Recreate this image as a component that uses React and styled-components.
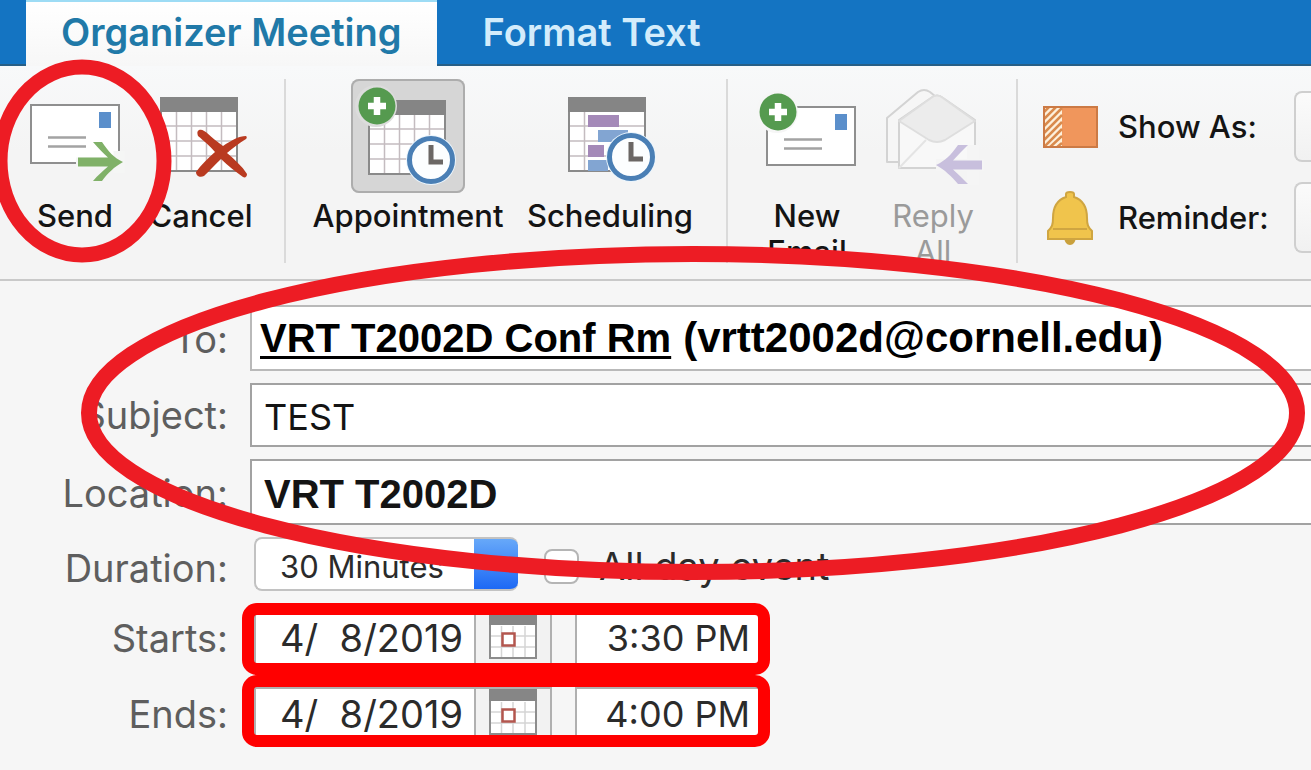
import React from "react";
import styled, { createGlobalStyle } from "styled-components";

const GlobalStyle = createGlobalStyle`
  * {
    box-sizing: border-box;
  }
  body {
    margin: 0;
    background: #f6f6f6;
    font-family: Inter, "Liberation Sans", sans-serif;
    overflow-x: hidden;
  }
  button, input, select {
    font-family: inherit;
    margin: 0;
  }
`;

function Envelope({ x, y }) {
  return (
    <g transform={`translate(${x} ${y})`}>
      <rect x="1" y="1" width="88" height="58" fill="#fff" stroke="#8f8f8f" strokeWidth="2" />
      <rect x="69" y="8" width="12" height="16" fill="#5b8fcb" />
      <path d="M18 33.500H56M18 42.500H56" stroke="#a3a3a3" strokeWidth="2.500" />
    </g>
  );
}

function Calendar({ x, y, children }) {
  return (
    <g transform={`translate(${x} ${y})`}>
      <rect x="1" y="1" width="76" height="73" fill="#fff" stroke="#8a8a8a" strokeWidth="2" />
      {children || (
        <path
          d="M16.500 14V73M31.500 14V73M46.500 14V73M61.500 14V73M2 29H76M2 44H76M2 59H76"
          stroke="#c4bcc0"
          strokeWidth="1.500"
        />
      )}
      <rect width="78" height="15" fill="#858585" />
    </g>
  );
}

function Clock({ x, y }) {
  return (
    <g transform={`translate(${x} ${y})`}>
      <circle r="25" fill="#eaf5fd" />
      <circle r="21.500" fill="#fcfeff" stroke="#4a7fb5" strokeWidth="5" />
      <path d="M0 -15V2H12" fill="none" stroke="#6b6765" strokeWidth="5" />
    </g>
  );
}

function PlusBadge({ x, y }) {
  return (
    <g transform={`translate(${x} ${y})`}>
      <circle r="18.500" fill="#559a4f" />
      <path d="M0 -9V9M-9 0H9" stroke="#fff" strokeWidth="6.500" />
    </g>
  );
}

function SendIcon() {
  return (
    <Glyph viewBox="0 0 114 114" aria-hidden="true">
      <Envelope x={12} y={25} />
      <path d="M58 84H106M101 72V94" stroke="#f5f6f5" strokeWidth="11" />
      <path
        d="M60 78.500H90C85 74 80 69 75 63H84C90 72 96 79 105 83C96 88 90 94 84 102H75C80 96 85 92 90 87.500H60Z"
        fill="#80b168"
      />
    </Glyph>
  );
}

function CancelIcon() {
  return (
    <Glyph viewBox="0 0 114 114" aria-hidden="true">
      <Calendar x={16} y={18} />
      <path
        d="M55 51C60 49 64 56 79 67C88 61 95 57 102 57C103 58 103 59 102 60C95 64 89 69 83 74C91 81 98 87 103 95C103 98 101 99 99 98C92 93 84 87 77 80C71 86 66 91 60 97C56 99 52 97 52 93C57 86 64 79 71 73C65 66 60 62 54 57C53 54 53 52 55 51Z"
        fill="#b93a20"
      />
    </Glyph>
  );
}

function AppointmentIcon() {
  return (
    <Glyph viewBox="0 0 114 114" aria-hidden="true">
      <Calendar x={17} y={21} />
      <circle cx="25" cy="27" r="21" fill="#dcdcdc" />
      <PlusBadge x={26} y={27} />
      <Clock x={80} y={81} />
    </Glyph>
  );
}

function SchedulingIcon() {
  return (
    <Glyph viewBox="0 0 114 114" aria-hidden="true">
      <Calendar x={15} y={18}>
        <path d="M16.500 14V73M2 29H76M2 44H76M2 59H76" stroke="#c4bcc0" strokeWidth="1.500" />
        <path d="M20 18H51V30H20ZM20 48H36V60H20Z" fill="#a489b8" />
        <path d="M30 33H60V45H30ZM20 63H40V74H20Z" fill="#82a5d2" />
      </Calendar>
      <Clock x={78} y={78} />
    </Glyph>
  );
}

function NewEmailIcon() {
  return (
    <Glyph viewBox="0 0 114 114" aria-hidden="true">
      <Envelope x={16} y={27} />
      <circle cx="27" cy="33" r="21" fill="#f6f6f6" />
      <PlusBadge x={28} y={33} />
    </Glyph>
  );
}

function ReplyAllIcon() {
  return (
    <Glyph viewBox="0 0 114 114" aria-hidden="true">
      <g stroke="#d3d3d3" strokeWidth="2" strokeLinejoin="round">
        <path d="M11 83V39L42 13Q48 9 54 13L86 39V83Z" fill="#f6f6f6" />
        <path d="M23 89V41L55 19Q61 14 67 19L99 41V89Z" fill="#f8f8f8" />
        <path d="M23 42L55 19Q61 14 67 19L99 42L69 61Q61 65 53 61Z" fill="#ececec" stroke="#dedede" />
        <path d="M23 89L50 61" fill="none" stroke="#e4e4e4" />
      </g>
      <path d="M60 86H108M97 66V106" stroke="#f5f5f5" strokeWidth="12" />
      <path
        d="M106 81.500H77C82 76 87 71 92 66H82C75 76 69 82 60 86C69 91 75 97 82 105H92C87 100 82 95 77 90.500H106Z"
        fill="#c8bfdd"
      />
    </Glyph>
  );
}

function ShowAsIcon() {
  return (
    <svg width="55" height="42" viewBox="0 0 55 42" aria-hidden="true">
      <rect width="55" height="42" fill="#f0965c" />
      <rect width="19" height="42" fill="#fdf0dc" />
      <path
        d="M0 7L7 0M0 14L14 0M0 21L19 2M0 28L19 9M0 35L19 16M0 42L19 23M6 42L19 30M13 42L19 37"
        stroke="#d98a4c"
        strokeWidth="2.500"
      />
      <rect x="1" y="1" width="53" height="40" fill="none" stroke="#cc7a45" strokeWidth="2" />
    </svg>
  );
}

function BellIcon() {
  return (
    <svg width="46" height="54" viewBox="0 0 46 54" aria-hidden="true">
      <path d="M17 46H29Q28 54 23 54Q18 54 17 46Z" fill="#c9a03c" />
      <path
        d="M19 6V3Q19 1 23 1Q27 1 27 3V6C36 9 40 17 40 27C40 34 41 36 45 40V48H1V40C5 36 6 34 6 27C6 17 10 9 19 6Z"
        fill="#f0c44c"
        stroke="#cfa541"
        strokeWidth="2"
      />
      <path d="M6 38H40" stroke="#cfa541" strokeWidth="2" />
    </svg>
  );
}

function DateIcon() {
  return (
    <svg width="48" height="46" viewBox="0 0 48 46" aria-hidden="true">
      <rect x="1" y="1" width="46" height="44" fill="#fff" stroke="#8c8c8c" strokeWidth="2" />
      <path d="M12.500 13V44M24 13V44M36 13V44M2 23H46M2 34H46" stroke="#d5d5d5" strokeWidth="1.500" />
      <rect width="48" height="12" fill="#868686" />
      <rect x="13.500" y="20.500" width="12" height="12" fill="#fff" stroke="#b3564e" strokeWidth="2.500" />
    </svg>
  );
}

function DateTime({ name, label, date, time }) {
  return (
    <>
      <Label htmlFor={name} $line={54}>{label}</Label>
      <TimeRow>
        <DateBox>
          <DateInput id={name} defaultValue={date} />
          <PickButton type="button" aria-label={`${label} pick a date`}>
            <DateIcon />
          </PickButton>
        </DateBox>
        <TimeInput aria-label={`${label} time`} defaultValue={time} />
      </TimeRow>
    </>
  );
}

function Annotations() {
  return (
    <Marks width="1311" height="770" viewBox="0 0 1311 770" aria-hidden="true">
      <g fill="none" stroke="#ed1c24">
        <ellipse cx="82" cy="161" rx="82" ry="94" strokeWidth="15" />
        <ellipse cx="693" cy="413" rx="604" ry="159" strokeWidth="16" />
      </g>
      <g fill="none" stroke="#ff0000" strokeWidth="12">
        <rect x="248" y="609" width="516" height="60" rx="9" />
        <rect x="248" y="681" width="516" height="60" rx="9" />
      </g>
    </Marks>
  );
}

export default function App() {
  return (
    <Window>
      <GlobalStyle />
      <TabBar>
        <Tab type="button" $active>
          Organizer Meeting
        </Tab>
        <Tab type="button">Format Text</Tab>
      </TabBar>

      <Ribbon>
        <Group $first>
          <Tool type="button" $width={102}>
            <IconSlot><SendIcon /></IconSlot>
            Send
          </Tool>
          <Tool type="button" $width={102}>
            <IconSlot><CancelIcon /></IconSlot>
            Cancel
          </Tool>
        </Group>
        <Group>
          <Tool type="button" $width={188}>
            <IconSlot $pressed><AppointmentIcon /></IconSlot>
            Appointment
          </Tool>
          <Tool type="button" $width={168}>
            <IconSlot><SchedulingIcon /></IconSlot>
            Scheduling
          </Tool>
        </Group>
        <Group>
          <Tool type="button" $width={102}>
            <IconSlot><NewEmailIcon /></IconSlot>
            New Email
          </Tool>
          <Tool type="button" $width={102} disabled>
            <IconSlot><ReplyAllIcon /></IconSlot>
            Reply All
          </Tool>
        </Group>
        <Options>
          <Option>
            <OptionIcon><ShowAsIcon /></OptionIcon>
            <OptionLabel htmlFor="show-as">Show As:</OptionLabel>
            <OptionSelect id="show-as">
              <option>Busy</option>
            </OptionSelect>
          </Option>
          <Option>
            <OptionIcon><BellIcon /></OptionIcon>
            <OptionLabel htmlFor="reminder">Reminder:</OptionLabel>
            <OptionSelect id="reminder">
              <option>15 Minutes</option>
            </OptionSelect>
          </Option>
        </Options>
      </Ribbon>

      <Form>
        <Label as="span" $line={64}>To:</Label>
        <Recipients>
          <a href="mailto:vrtt2002d@cornell.edu">VRT T2002D Conf Rm</a>
          <Address>(vrtt2002d@cornell.edu)</Address>
        </Recipients>
        <Label htmlFor="subject" $line={64}>Subject:</Label>
        <TextInput id="subject" defaultValue="TEST" />
        <Label htmlFor="location" $line={64}>Location:</Label>
        <TextInput id="location" defaultValue="VRT T2002D" $bold />
        <Label htmlFor="duration" $line={62}>Duration:</Label>
        <DurationRow>
          <DurationSelect id="duration">
            <option>30 Minutes</option>
          </DurationSelect>
          <AllDay>
            <input type="checkbox" />
            All day event
          </AllDay>
        </DurationRow>
        <DateTime name="starts" label="Starts:" date="4/  8/2019" time="3:30 PM" />
        <DateTime name="ends" label="Ends:" date="4/  8/2019" time="4:00 PM" />
      </Form>
      <Annotations />
    </Window>
  );
}

const Window = styled.div`
  position: relative;
  min-height: 100vh;
  overflow: hidden;
  background: #f6f6f6;
`;

const TabBar = styled.div`
  display: flex;
  height: 66px;
  padding-left: 26px;
  background: #1474c2;
  border-bottom: 2px solid #285f86;
`;

const Tab = styled.button`
  height: 66px;
  padding: 0 35px 4px;
  border: none;
  border-top: 2px solid ${({ $active }) => ($active ? "#9ddcf5" : "transparent")};
  background: ${({ $active }) => ($active ? "linear-gradient(#ffffff, #f7f7f7)" : "none")};
  color: ${({ $active }) => ($active ? "#2079a8" : "#d3ecfb")};
  font-size: 38px;
  font-weight: 600;
  line-height: 56px;
  white-space: nowrap;
  & + & {
    padding-left: 46px;
  }
`;

const Ribbon = styled.div`
  display: flex;
  padding: 13px 0 9px;
  border-bottom: 2px solid #c9c9c9;
  background: linear-gradient(#f8f9fa, #f4f4f4 40%);
`;

const Group = styled.div`
  display: flex;
  flex: none;
  gap: 24px;
  height: 191px;
  padding: 0 34px 0 ${({ $first }) => ($first ? 24 : 28)}px;
  background: linear-gradient(#dadada, #dadada) right top / 2px 184px no-repeat;
`;

const Tool = styled.button`
  display: flex;
  flex-direction: column;
  align-items: center;
  gap: 5px;
  width: ${({ $width }) => $width}px;
  padding: 0;
  border: none;
  background: none;
  color: #141414;
  font-size: 31px;
  font-weight: 500;
  line-height: 36px;
  &:disabled {
    color: #9a9a9a;
    font-weight: 400;
  }
`;

const IconSlot = styled.span`
  flex: none;
  width: 114px;
  height: 114px;
  border-radius: 8px;
  background: ${({ $pressed }) => ($pressed ? "#d6d6d6" : "none")};
  box-shadow: ${({ $pressed }) => ($pressed ? "inset 0 0 0 2px #adadad" : "none")};
`;

const Glyph = styled.svg`
  display: block;
  width: 114px;
  height: 114px;
`;

const Options = styled.div`
  display: flex;
  flex: 1;
  flex-direction: column;
  gap: 20px;
  padding: 12px 0 0 24px;
`;

const Option = styled.div`
  display: flex;
  align-items: center;
`;

const OptionIcon = styled.span`
  display: flex;
  flex: none;
  justify-content: center;
  width: 56px;
`;

const OptionLabel = styled.label`
  flex: none;
  width: 176px;
  margin-left: 20px;
  color: #141414;
  font-size: 31px;
  font-weight: 500;
  line-height: 36px;
`;

const OptionSelect = styled.select`
  flex: 1 0 auto;
  height: 71px;
  padding: 0 14px;
  appearance: none;
  border: 2px solid #cfcfcf;
  border-right: none;
  border-radius: 8px 0 0 8px;
  background: linear-gradient(#fbfbfb, #f1f1f1);
  color: #2b2b2b;
  font-size: 31px;
`;

const Form = styled.form`
  display: grid;
  grid-template-columns: 228px 1fr;
  gap: 12px 22px;
  padding: 24px 0;
`;

const Label = styled.label`
  align-self: ${({ $line }) => ($line < 60 ? "start" : "end")};
  color: #5e5e5e;
  font-size: 38px;
  line-height: ${({ $line }) => $line}px;
  text-align: right;
`;

const Recipients = styled.div`
  display: flex;
  align-items: center;
  gap: 12px;
  height: 66px;
  padding-left: 8px;
  border: 2px solid #b9b9b9;
  border-right: none;
  background: #fff;
  font-family: "Liberation Sans", sans-serif;
  font-size: 40px;
  font-weight: 700;
  white-space: nowrap;
  a {
    color: #000;
    text-decoration-thickness: 3px;
    text-underline-offset: 4px;
  }
`;

const Address = styled.span`
  font-size: 42px;
`;

const TextInput = styled.input`
  width: 100%;
  height: ${({ $bold }) => ($bold ? 66 : 64)}px;
  padding: 4px 0 0 12px;
  border: 2px solid #a2a2a2;
  border-right: none;
  border-radius: 0;
  background: #fff;
  color: #141414;
  && {
    font-family: ${({ $bold }) => ($bold ? '"Liberation Sans", sans-serif' : "inherit")};
  }
  font-size: ${({ $bold }) => ($bold ? 40 : 36)}px;
  font-weight: ${({ $bold }) => ($bold ? 700 : 400)};
`;

const DurationRow = styled.div`
  display: flex;
  align-items: flex-start;
  gap: 26px;
  height: 62px;
  padding-left: 4px;
`;

const DurationSelect = styled.select`
  width: 264px;
  height: 54px;
  padding: 4px 24px 0;
  appearance: none;
  border: 2px solid #c2c2c2;
  border-right: none;
  border-radius: 8px;
  background: linear-gradient(#6aabf9, #1a66f5) right / 44px 100% no-repeat border-box, #fff;
  color: #2b2b2b;
  font-size: 31px;
`;

const AllDay = styled.label`
  display: flex;
  align-items: center;
  gap: 20px;
  color: #2b2b2b;
  font-size: 38px;
  line-height: 58px;
  input {
    width: 35px;
    height: 35px;
    appearance: none;
    border: 2px solid #b5b5b5;
    border-radius: 8px;
    background: #fff;
  }
`;

const TimeRow = styled.div`
  display: flex;
  align-items: flex-start;
  gap: 23px;
  height: 64px;
  padding-left: 4px;
`;

const DateBox = styled.div`
  display: flex;
  height: 54px;
  border: 2px solid #b0b0b0;
`;

const DateInput = styled.input`
  width: 220px;
  padding: 0 0 0 24px;
  border: none;
  border-right: 2px solid #b0b0b0;
  background: #fff;
  color: #2b2b2b;
  font-size: 38px;
`;

const PickButton = styled.button`
  display: flex;
  align-items: flex-start;
  justify-content: center;
  width: 74px;
  padding: 0;
  border: none;
  background: #f2f2f2;
`;

const TimeInput = styled.input`
  width: 186px;
  height: 54px;
  padding: 0 9px 0 0;
  border: 2px solid #b0b0b0;
  background: #fff;
  color: #2b2b2b;
  font-size: 36px;
  text-align: right;
`;

// red marker drawings that lie over the window
const Marks = styled.svg`
  position: absolute;
  top: 0;
  left: 0;
  pointer-events: none;
`;
